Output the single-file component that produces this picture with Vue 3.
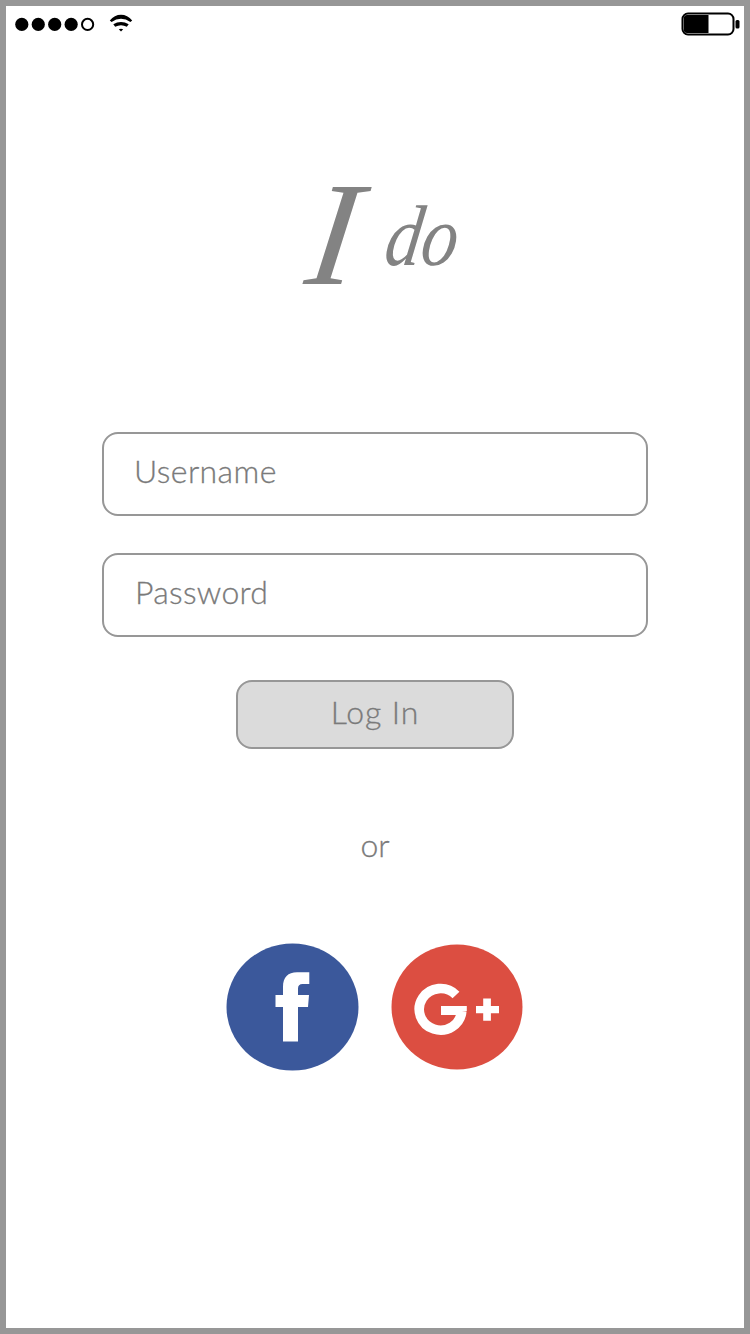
<script setup>
const signal = [true, true, true, true, false]
const fields = ['Username', 'Password']
</script>

<template>
  <main class="screen">
    <header class="status">
      <svg class="left" width="120" height="20" viewBox="0 0 120 20">
        <circle
          v-for="(on, n) in signal"
          :key="n"
          :cx="6.8 + n * 16.45"
          cy="10.4"
          :r="on ? 6.6 : 5.6"
          :fill="on ? '#000' : '#fff'"
          :stroke="on ? 'none' : '#000'"
          stroke-width="2"
        />
        <g transform="translate(94 0)">
          <path d="M0.8 6.6 Q5.5 0.8 12 0.8 T23.2 6.6 L21.4 8 Q17 4.7 12 4.7 T2.6 8Z" />
          <path d="M4.3 10.2 Q8 7.9 12 7.9 T19.7 10.2 L17.8 12.8 Q15 11.3 12 11.3 T6.2 12.8Z" />
          <path d="M9.8 15.2 Q12 14.5 14.2 15.2 L12 17.4Z" />
        </g>
      </svg>
      <svg class="battery" width="59" height="24" viewBox="0 0 59 24">
        <rect x="1.5" y="1.5" width="51" height="21" rx="5.5" fill="#fff" stroke="#000" stroke-width="2" />
        <path d="M6 3H27.5V21H6Q2.8 21 2.8 17.5V6.5Q2.8 3 6 3Z" />
        <rect x="54.5" y="8" width="4" height="8.5" rx="1.5" />
      </svg>
    </header>

    <h1 class="brand"><span class="cap">I</span> <span class="low">do</span></h1>

    <form class="form" @submit.prevent>
      <div v-for="f in fields" :key="f" class="field"><span :class="f.toLowerCase()">{{ f }}</span></div>
      <button class="login"><span>Log In</span></button>
    </form>

    <p class="or">or</p>

    <div class="social">
      <svg width="133" height="128" viewBox="0 0 133 128">
        <ellipse cx="66.5" cy="64" rx="66" ry="63.5" fill="#3b589b" />
        <path fill="#fff" d="M57 98.5V64H49.5V52H57V44C57 34 62 29.2 71 29.2H83.3V41H76.5Q72 41 72 45.5V52H83L82 64H72V98.5Z" />
      </svg>
      <svg width="132" height="126" viewBox="0 0 132 126">
        <ellipse cx="66" cy="63" rx="65.5" ry="62.5" fill="#dc4e41" />
        <path fill="none" stroke="#fff" stroke-width="9.6" d="M65 51A21.3 20.8 0 1 0 70.8 67" />
        <path fill="#fff" d="M50 62H75.8V67H70V71H50Z" />
        <path fill="#fff" d="M92.2 54.5H99.9V62H108V69.3H99.9V76.8H92.2V69.3H85V62H92.2Z" />
      </svg>
    </div>
  </main>
</template>

<style>
body { margin: 0; }
</style>

<style scoped>
.screen {
  box-sizing: border-box;
  width: 750px;
  height: 1334px;
  border: 6px solid #979797;
  background: #fff;
  display: flex;
  flex-direction: column;
  align-items: center;
  overflow: hidden;
  color: #7a7a7a;
  font-family: Lato, "Open Sans", sans-serif;
  font-weight: 300;
  font-size: 32px;
  line-height: 40px;
  -webkit-text-stroke: 0.3px #7a7a7a;
}
.status {
  box-sizing: border-box;
  width: 100%;
  height: 36px;
  padding: 0 4px 0 9px;
  display: flex;
  justify-content: space-between;
  align-items: center;
}
.brand {
  margin: 130px 0 0;
  width: 156px;
  height: 120px;
  display: flex;
  justify-content: space-between;
  align-items: flex-start;
  color: #838383;
  font-family: "Liberation Serif", serif;
  font-style: italic;
  font-weight: 400;
  transform: translateX(5px);
  -webkit-text-stroke: 0;
}
.cap {
  font-size: 148px;
  line-height: 120px;
  transform: translate(8px, 2px) skewX(-8deg);
}
.low {
  font-size: 86px;
  line-height: 120px;
  transform: translate(1px, 4px) scaleX(0.84) skewX(-10deg);
  transform-origin: right;
}
.form {
  margin-top: 140px;
  display: flex;
  flex-direction: column;
  align-items: center;
}
.field {
  box-sizing: border-box;
  width: 546px;
  height: 84px;
  margin-bottom: 37px;
  padding: 17px 0 0 30px;
  border: 2px solid #979797;
  border-radius: 16px;
}
.username { letter-spacing: 0.4px; }
.password { margin-left: 1px; letter-spacing: 0.3px; }
.login {
  box-sizing: border-box;
  width: 278px;
  height: 69px;
  margin-top: 6px;
  padding: 0 0 5px;
  border: 2px solid #979797;
  border-radius: 16px;
  background: #dbdbdb;
  color: #7a7a7a;
  font: inherit;
  letter-spacing: 0.9px;
}
.or { margin: 76px 0 0; }
.social {
  margin: 78px 2px 0 0;
  display: flex;
  align-items: center;
  gap: 32px;
}
.social svg { display: block; }
</style>
